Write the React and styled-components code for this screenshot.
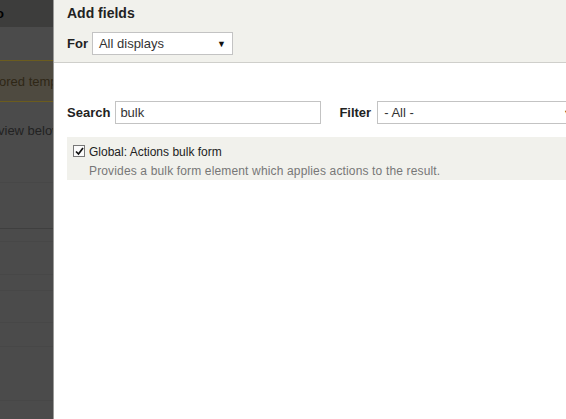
import React from 'react';
import styled, { createGlobalStyle } from 'styled-components';

const Global = createGlobalStyle`
  html, body { margin: 0; padding: 0; background: #fff; }
  body { font-family: "Liberation Sans", Arial, sans-serif; color: #333; }
`;

const Page = styled.div`
  display: flex;
  width: 566px;
  height: 419px;
  overflow: hidden;
`;

const Backdrop = styled.div`
  width: 53px;
  flex: none;
  background: #4b4b4b;
  border-right: 1px solid #9a9a98;
  display: flex;
  flex-direction: column;
  overflow: hidden;
`;

const BackRow = styled.div`
  height: ${p => p.h}px;
  flex: none;
  background: ${p => p.bg || 'transparent'};
  border-bottom: 1px solid ${p => p.line || '#474747'};
  color: ${p => p.fg || '#222'};
  font-size: 13px;
  white-space: nowrap;
  display: flex;
  align-items: ${p => p.align || 'center'};
  box-sizing: border-box;
  padding-top: ${p => p.pt || 0}px;
  font-weight: ${p => (p.bold ? 'bold' : 'normal')};
`;

const BackText = styled.span`
  margin-left: ${p => p.shift}px;
`;

const Panel = styled.div`
  flex: 1;
  background: #fff;
  display: flex;
  flex-direction: column;
  min-width: 0;
`;

const Header = styled.div`
  background: #f1f1ec;
  border-bottom: 1px solid #cfcfcb;
  height: 63px;
  box-sizing: border-box;
  padding: 5px 0 0 13px;
`;

const Title = styled.h2`
  margin: 0;
  font-size: 14px;
  font-weight: bold;
  color: #222;
  line-height: 17px;
`;

const FormRow = styled.div`
  display: flex;
  align-items: center;
  gap: 4px;
  margin-top: 10px;
`;

const Label = styled.label`
  font-weight: bold;
  font-size: 13px;
  color: #222;
  margin-left: ${p => p.gap || 0}px;
`;

const Select = styled.div`
  box-sizing: border-box;
  width: ${p => p.w}px;
  height: 23px;
  margin-left: ${p => p.gap || 0}px;
  border: 1px solid #c3c3c3;
  background: #fff;
  font-size: 13px;
  color: #333;
  display: flex;
  align-items: center;
  justify-content: space-between;
  padding: 0 6px 0 6px;
  white-space: nowrap;
  flex: none;
`;

const Arrow = styled.span`
  font-size: 9px;
  color: #111;
`;

const Input = styled.div`
  box-sizing: border-box;
  width: 206px;
  height: 23px;
  margin-left: 5px;
  border: 1px solid #c3c3c3;
  font-size: 13px;
  color: #333;
  display: flex;
  align-items: center;
  padding-left: 4px;
  flex: none;
`;

const Body = styled.div`
  padding: 38px 0 0 13px;
`;

const SearchBar = styled.div`
  display: flex;
  align-items: center;
`;

const Result = styled.div`
  margin-top: 13px;
  background: #f1f1ec;
  height: 43px;
  box-sizing: border-box;
  padding: 8px 0 0 6px;
`;

const Check = styled.div`
  display: flex;
  align-items: center;
  gap: 4px;
  font-size: 12px;
  color: #222;
`;

const Box = styled.span`
  width: 10px;
  height: 10px;
  border: 1px solid #777;
  background: #fbfbfb;
  display: inline-flex;
  align-items: center;
  justify-content: center;
  position: relative;
  top: -1px;
`;

const Desc = styled.div`
  font-size: 12px;
  color: #777;
  padding-left: 16px;
  margin-top: 5px;
  letter-spacing: 0.15px;
`;

export default function App() {
  return (
    <>
      <Global />
      <Page>
        <Backdrop>
          <BackRow h={27} bg="#3d3d3c" line="#3d3d3c" fg="#000" bold>
            <BackText shift={-4}>o</BackText>
          </BackRow>
          <BackRow h={34} line="#6b5c1e" />
          <BackRow h={41} bg="#4e4a40" line="#6b5c1e" fg="#2e2716">
            <BackText shift={-1}>ored template</BackText>
          </BackRow>
          <BackRow h={81} align="flex-start" pt={21}>
            <BackText shift={-2}>view below</BackText>
          </BackRow>
          <BackRow h={46} line="#3f3f3f" />
          <BackRow h={13} />
          <BackRow h={33} />
          <BackRow h={16} />
          <BackRow h={32} />
          <BackRow h={24} />
          <BackRow h={54} />
          <BackRow h={19} />
        </Backdrop>
        <Panel>
          <Header>
            <Title>Add fields</Title>
            <FormRow>
              <Label>For</Label>
              <Select w={141}>All displays<Arrow>▼</Arrow></Select>
            </FormRow>
          </Header>
          <Body>
            <SearchBar>
              <Label>Search</Label>
              <Input>bulk</Input>
              <Label gap={18}>Filter</Label>
              <Select w={202} gap={6}>- All -<Arrow>▼</Arrow></Select>
            </SearchBar>
            <Result>
              <Check>
                <Box>
                  <svg width="9" height="9" viewBox="0 0 9 9">
                    <path d="M1 4.5 L3.5 7 L8 1" fill="none" stroke="#111" strokeWidth="1.7" />
                  </svg>
                </Box>
                Global: Actions bulk form
              </Check>
              <Desc>Provides a bulk form element which applies actions to the result.</Desc>
            </Result>
          </Body>
        </Panel>
      </Page>
    </>
  );
}
